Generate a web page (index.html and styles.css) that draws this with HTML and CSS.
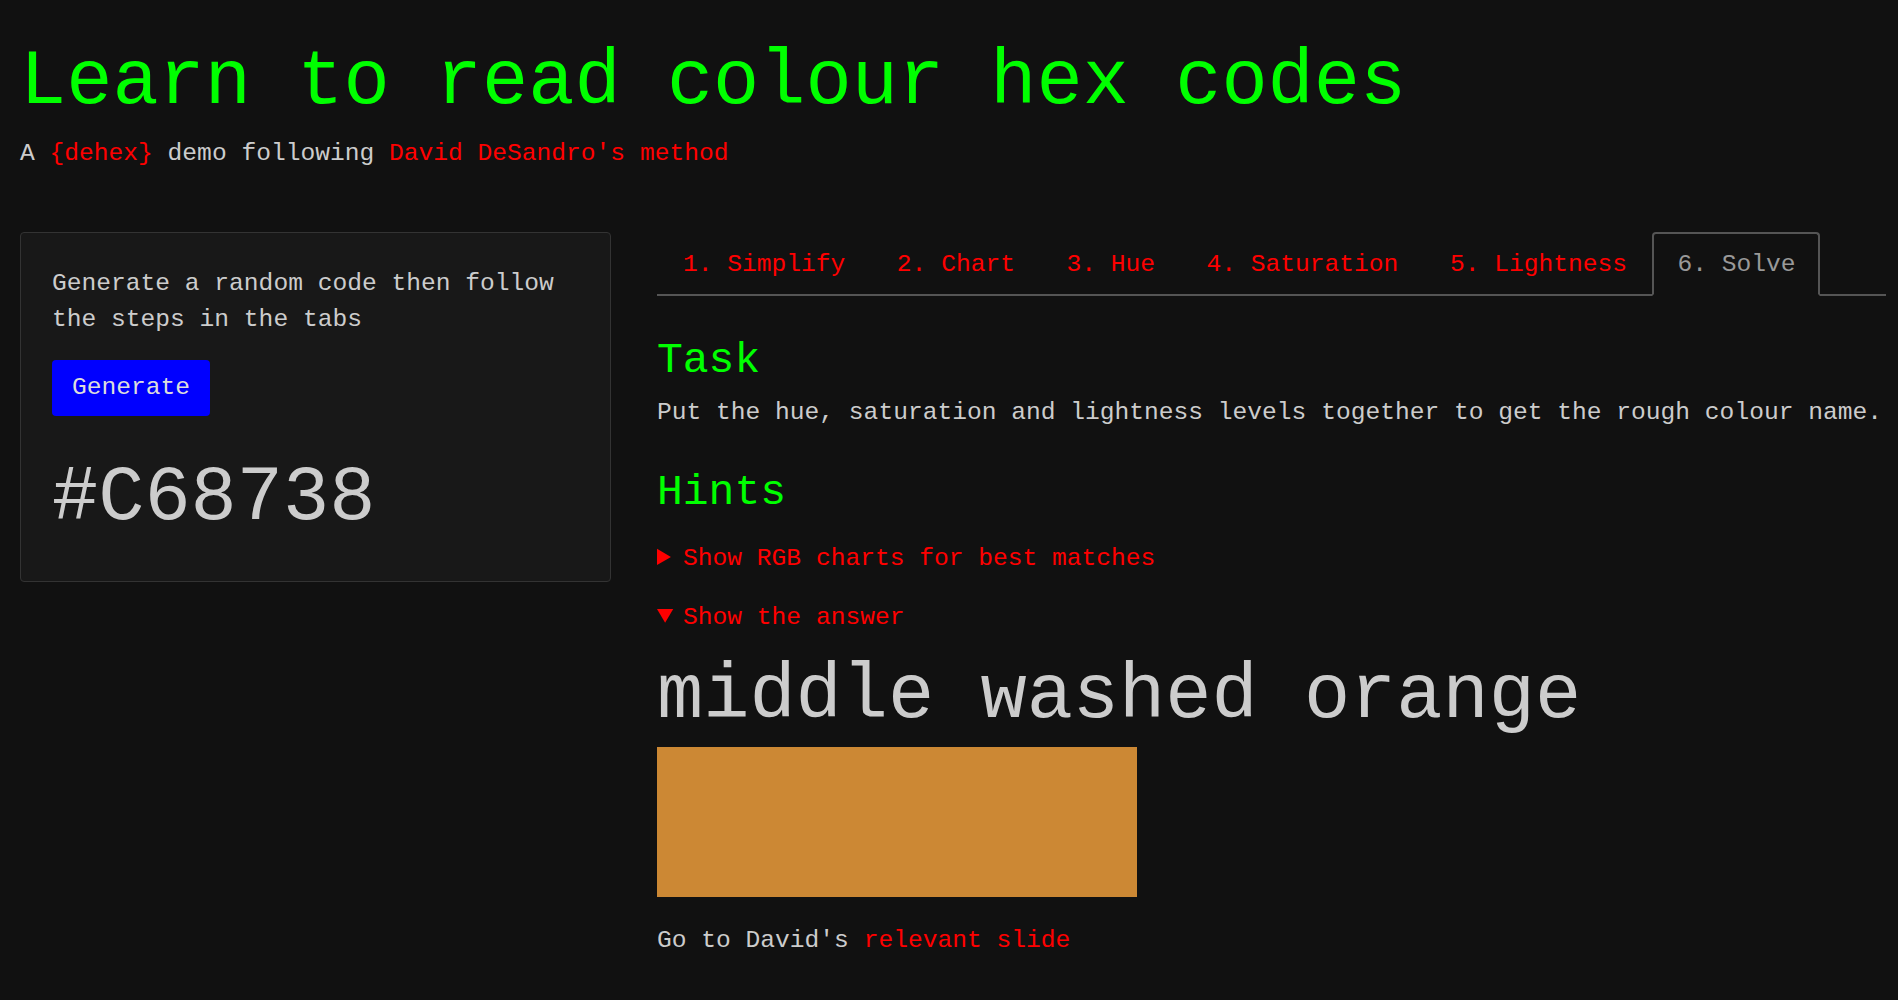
FILE: index.html
```html
<!DOCTYPE html>
<html lang="en">
<head>
<meta charset="utf-8">
<title>Learn to read colour hex codes</title>
<link rel="stylesheet" href="styles.css">
</head>
<body>
<div class="page">
  <header class="header">
    <h1 class="title">Learn to read colour hex codes</h1>
    <p class="subtitle">A <a class="link" href="#">{dehex}</a> demo following <a class="link" href="#">David DeSandro's method</a></p>
  </header>
  <main class="main">
    <section class="card">
      <p class="card-text">Generate a random code then follow the steps in the tabs</p>
      <button class="btn" type="button">Generate</button>
      <p class="hex">#C68738</p>
    </section>
    <section class="panel">
      <nav class="tabs">
        <a class="tab" href="#">1. Simplify</a>
        <a class="tab" href="#">2. Chart</a>
        <a class="tab" href="#">3. Hue</a>
        <a class="tab" href="#">4. Saturation</a>
        <a class="tab" href="#">5. Lightness</a>
        <span class="tab tab-active">6. Solve</span>
      </nav>
      <h2 class="heading heading-task">Task</h2>
      <p class="text text-task">Put the hue, saturation and lightness levels together to get the rough colour name.</p>
      <h2 class="heading heading-hints">Hints</h2>
      <details class="hint hint-first">
        <summary class="hint-summary">Show RGB charts for best matches</summary>
        <p class="text">RGB charts</p>
      </details>
      <details class="hint hint-second" open>
        <summary class="hint-summary">Show the answer</summary>
        <p class="answer">middle washed orange</p>
        <div class="swatch"></div>
      </details>
      <p class="text text-slide">Go to David's <a class="link" href="#">relevant slide</a></p>
    </section>
  </main>
</div>
</body>
</html>
```

FILE: styles.css
```css
* {
  box-sizing: border-box;
}

html, body {
  margin: 0;
  background: #111111;
}

body {
  font-family: "Liberation Mono", "DejaVu Sans Mono", monospace;
  font-size: 24.6px;
  line-height: 36px;
  color: #cccccc;
}

.page {
  padding: 20px 12px 0 20px;
}

.title {
  margin: 17px 0 0;
  font-size: 77px;
  line-height: 1.2;
  font-weight: normal;
  color: #00ff00;
}

.subtitle {
  margin: 7px 0 0;
}

.link {
  color: #ff0000;
  text-decoration: none;
}

.main {
  display: flex;
  align-items: flex-start;
  gap: 46px;
  margin-top: 60px;
}

.card {
  flex: none;
  width: 591px;
  padding: 33px 31px 35px;
  background: #181818;
  border: 1px solid #333333;
  border-radius: 4px;
}

.card-text {
  margin: 0;
}

.btn {
  display: block;
  margin-top: 22px;
  padding: 10px 20px;
  font: inherit;
  line-height: 36px;
  color: #dddddd;
  background: #0000ff;
  border: none;
  border-radius: 4px;
}

.hex {
  margin: 37px 0 0;
  font-size: 77px;
  line-height: 1.2;
  color: #cccccc;
}

.panel {
  flex: 1;
  min-width: 0;
}

.tabs {
  display: flex;
  border-bottom: 2px solid #555555;
}

.tab {
  padding: 13px 24px 11px;
  margin-bottom: -2px;
  border: 2px solid transparent;
  color: #ff0000;
  text-decoration: none;
}

.tab:nth-child(n+2) {
  margin-left: -0.5px;
}

.tab-active {
  padding-left: 23px;
  padding-right: 22px;
  color: #999999;
  border-color: #555555;
  border-bottom-color: #111111;
  border-radius: 4px 4px 0 0;
  background: #111111;
}

.heading {
  margin: 0;
  font-size: 43px;
  line-height: 1.2;
  font-weight: normal;
  color: #00ff00;
}

.heading-task {
  margin-top: 39px;
}

.heading-hints {
  margin-top: 36.5px;
}

.text {
  margin: 0;
}

.text-task {
  margin-top: 8px;
}

.hint-first {
  margin-top: 22px;
}

.hint-second {
  margin-top: 23px;
}

.hint-summary {
  color: #ff0000;
  cursor: pointer;
}

.answer {
  margin: 14.5px 0 0;
  font-size: 77px;
  line-height: 1.2;
  color: #cccccc;
}

.swatch {
  margin-top: 4px;
  width: 480px;
  height: 150px;
  background: #cc8834;
}

.text-slide {
  margin-top: 26px;
}
```
